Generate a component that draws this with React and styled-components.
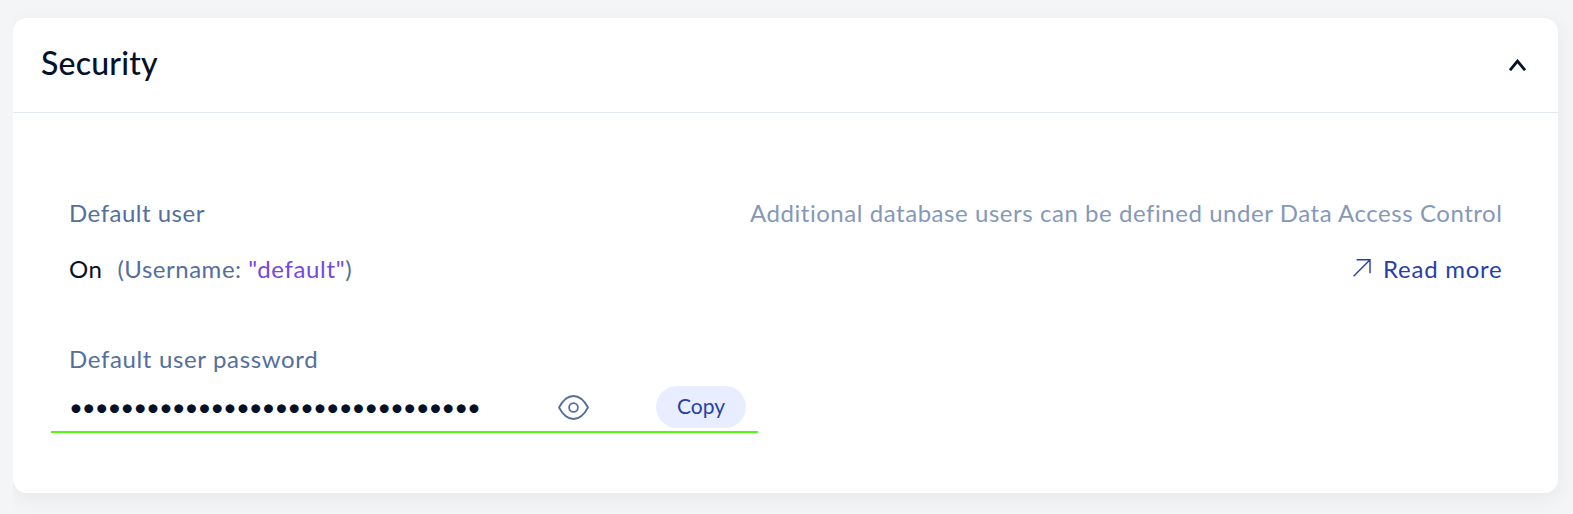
import React from "react";
import styled, { createGlobalStyle } from "styled-components";

const GlobalStyle = createGlobalStyle`
  *, *::before, *::after { box-sizing: border-box; }
  body { margin: 0; background: #f4f5f7; font-family: Lato, sans-serif; }
`;

const Page = styled.main`
  height: 514px;
  margin-left: 13px;
  padding: 18px 15px 21px 0;
  overflow: hidden;
`;

const Card = styled.section`
  height: 475px;
  border-radius: 14px;
  background: #fff;
  box-shadow: 0 5px 22px rgba(20, 22, 24, 0.06);
`;

const CardHeader = styled.header`
  display: flex;
  align-items: center;
  justify-content: space-between;
  height: 95px;
  padding: 0 32px 0 28px;
  border-bottom: 1px solid #e4e8ef;
`;

const Title = styled.h2`
  margin: 0;
  padding-bottom: 4px;
  color: #051128;
  font-size: 32px;
  font-weight: 500;
  line-height: 40px;
  letter-spacing: 0.2px;
`;

const CardBody = styled.div`
  display: flex;
  flex-direction: column;
  padding: 84px 55.5px 0 56px;
`;

const Row = styled.div`
  display: flex;
  align-items: center;
  justify-content: space-between;
  height: 32px;
  margin-bottom: ${(p) => p.$gap || 0}px;
`;

const tones = {
  label: "#546f9b",
  muted: "#8598b9",
  strong: "#051128",
  value: "#7549e0",
  link: "#273fa9",
};

const Text = styled.span`
  color: ${(p) => tones[p.$tone]};
  font-size: ${(p) => p.$size || 24}px;
  line-height: 32px;
  letter-spacing: ${(p) => p.$track || 0}px;
  white-space: pre;
`;

const Status = styled.div`
  display: flex;
`;

const Username = styled.div`
  display: flex;
  margin-left: 15px;
`;

const Link = styled.a`
  display: flex;
  align-items: center;
  gap: 12.5px;

  svg {
    margin-bottom: 3px;
  }
`;

const PasswordRow = styled.div`
  display: flex;
  align-items: center;
  width: 707px;
  height: 47px;
  margin: 11px 0 0 -18px;
  padding: 0 12px 3px 18px;
  border-bottom: 2px solid #50fa0a;
`;

const Dots = styled.span`
  flex: 1;
  color: #051128;
  font-size: 24px;
  line-height: 32px;
  letter-spacing: -1.08px;
  white-space: nowrap;
`;

const IconButton = styled.button`
  display: flex;
  margin: 0 67px 0 0;
  padding: 0;
  border: 0;
  background: none;
`;

const CopyButton = styled.button`
  width: 90px;
  height: 42px;
  padding: 0 0 2px;
  border: 0;
  border-radius: 21px;
  background: #e8edff;
  font-family: inherit;
`;

const ChevronUp = () => (
  <svg width="17" height="12" viewBox="0 0 17 12" fill="none" stroke="#051128" strokeWidth="2.8">
    <path d="M1 11.2 8.5 2.1 16 11.2" />
  </svg>
);

const ArrowUpRight = () => (
  <svg width="18" height="18" viewBox="0 0 18 18" fill="none" stroke="#273fa9" strokeWidth="1.4">
    <path d="M.6 17.2 16.8 1M3.6.8H17V14.2" />
  </svg>
);

const Eye = () => (
  <svg width="31" height="25" viewBox="0 0 31 25" fill="none" stroke="#546f9b" strokeWidth="1.8">
    <path d="M1 12.5C5 5 10 1 15.5 1S26 5 30 12.5C26 20 21 24 15.5 24S5 20 1 12.5Z" strokeLinejoin="round" />
    <circle cx="15.5" cy="12.5" r="4.4" />
  </svg>
);

export default function App() {
  return (
    <>
      <GlobalStyle />
      <Page>
        <Card>
          <CardHeader>
            <Title>Security</Title>
            <ChevronUp />
          </CardHeader>
          <CardBody>
            <Row $gap={24}>
              <Text $tone="label" $track={0.5}>Default user</Text>
              <Text $tone="muted" $track={0.55}>
                Additional database users can be defined under Data Access Control
              </Text>
            </Row>
            <Row $gap={58}>
              <Status>
                <Text $tone="strong" $track={0.5}>On</Text>
                <Username>
                  <Text $tone="label" $track={0.52}>{"(Username: "}</Text>
                  <Text $tone="value" $track={0.65}>"default"</Text>
                  <Text $tone="label">)</Text>
                </Username>
              </Status>
              <Link>
                <ArrowUpRight />
                <Text $tone="link" $track={0.75}>Read more</Text>
              </Link>
            </Row>
            <Row>
              <Text $tone="label" $track={0.65}>Default user password</Text>
            </Row>
            <PasswordRow>
              <Dots>{"•".repeat(32)}</Dots>
              <IconButton aria-label="Show password">
                <Eye />
              </IconButton>
              <CopyButton>
                <Text $tone="link" $size={21}>Copy</Text>
              </CopyButton>
            </PasswordRow>
          </CardBody>
        </Card>
      </Page>
    </>
  );
}
